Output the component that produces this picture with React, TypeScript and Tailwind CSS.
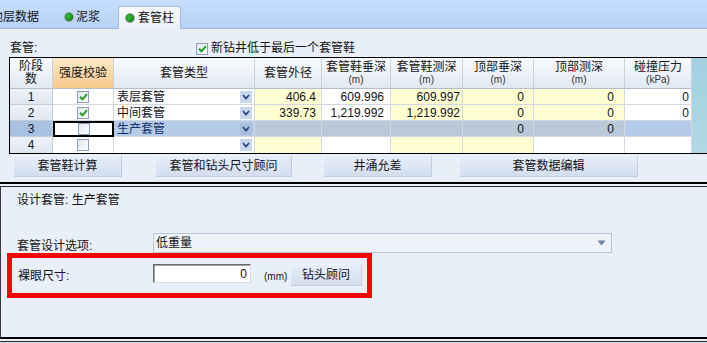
import React from "react";

const widths = ["w-[43px]", "w-[61px]", "w-[141px]", "w-[67px]", "w-[69px]", "w-[72px]", "w-[71px]", "w-[91px]", "w-[67px]"];
const numW = ["w-[67px]", "w-[69px]", "w-[72px]", "w-[71px]", "w-[91px]", "w-[67px]"];
const numPad = ["pr-[5px]", "pr-[6px]", "pr-[2px]", "pr-[9px]", "pr-[10px]", "pr-[2px]"];

const Y = "bg-[#fffed3]";
const W = "bg-white";
const S = "bg-[#b9c9d8]";
const B = "bg-[#b4cbe9]";

type Row = { n: string; checked: boolean; type: string; vals: string[]; bgs: string[]; sel?: boolean };

const rows: Row[] = [
  { n: "1", checked: true, type: "表层套管", vals: ["406.4", "609.996", "609.997", "0", "0", "0"], bgs: [Y, W, Y, Y, Y, W] },
  { n: "2", checked: true, type: "中间套管", vals: ["339.73", "1,219.992", "1,219.992", "0", "0", "0"], bgs: [Y, W, Y, Y, Y, W] },
  { n: "3", checked: false, type: "生产套管", vals: ["", "", "", "0", "0", ""], bgs: [S, S, S, S, S, B], sel: true },
  { n: "4", checked: false, type: "", vals: ["", "", "", "", "", ""], bgs: [Y, W, Y, Y, W, W] },
];

const headers: [string, string?][] = [
  ["阶段", "数"],
  ["强度校验"],
  ["套管类型"],
  ["套管外径"],
  ["套管鞋垂深", "(m)"],
  ["套管鞋测深", "(m)"],
  ["顶部垂深", "(m)"],
  ["顶部测深", "(m)"],
  ["碰撞压力", "(kPa)"],
];

function Check({ checked }: { checked: boolean }) {
  return (
    <span className="flex h-[12px] w-[12px] items-center justify-center border border-[#8e9fb5] bg-gradient-to-br from-[#dfe5ee] to-white">
      {checked && (
        <svg width="9" height="8" viewBox="0 0 9 8">
          <path d="M1 3.8 L3.5 6.3 L8 1.2" fill="none" stroke="#22a022" strokeWidth="2" />
        </svg>
      )}
    </span>
  );
}

function Dot() {
  return (
    <span className="h-[10px] w-[10px] rounded-full border border-[#8aa596] bg-[radial-gradient(circle_at_40%_40%,#3cbf3c,#086a08)]" />
  );
}

function Arrow({ dark }: { dark?: boolean }) {
  return (
    <span className={`flex h-[12px] w-[12px] items-center justify-center ${dark ? "bg-[#a9bedb]" : "bg-[#c9d8ee]"}`}>
      <svg width="8" height="6" viewBox="0 0 8 6">
        <path d="M1 1 L4 4.5 L7 1" fill="none" stroke="#2c4c86" strokeWidth="1.8" />
      </svg>
    </span>
  );
}

function Btn({ className, children }: { className: string; children: React.ReactNode }) {
  return (
    <div
      className={`flex h-[22px] items-center justify-center border border-[#eef3fa] border-b-[#c2cfe1] border-r-[#c2cfe1] bg-gradient-to-b from-[#e7eef9] to-[#d2deee] ${className}`}
    >
      {children}
    </div>
  );
}

export default function App() {
  return (
    <div className="relative h-[343px] w-[707px] overflow-hidden bg-[#e9eff8] font-['Liberation_Sans','Noto_Sans_CJK_SC',sans-serif] text-[12px] leading-[14px] text-[#141414]">
      {/* tabs */}
      <div className="flex h-[29px] items-end border-b border-[#9fb7d6] bg-gradient-to-b from-[#c7defd] to-[#b7d2f6]">
        <div className="flex h-[22px] items-center">
          <span className="ml-[-9px]">地层数据</span>
        </div>
        <div className="ml-[25px] flex h-[22px] items-center gap-[2px]">
          <Dot />
          <span>泥浆</span>
        </div>
        <div className="mb-[-1px] ml-[18px] flex h-[23px] items-center gap-[3px] rounded-t-[3px] border border-b-0 border-[#a5bcd9] bg-gradient-to-b from-[#f7f9fd] to-[#eaf0f8] px-[6px]">
          <Dot />
          <span>套管柱</span>
        </div>
      </div>

      {/* upper panel */}
      <div className="flex h-[28px] items-end pb-[2px] pl-[10px]">
        <span className="w-[186px]">套管:</span>
        <Check checked />
        <span className="ml-[3px]">新钻井低于最后一个套管鞋</span>
      </div>

      <div className="ml-[9px] w-[720px] border border-black bg-gradient-to-b from-[#a4d0df] to-[#b0d9e6]">
        <div className="flex h-[31px]">
          {headers.map((h, i) => (
            <div
              key={i}
              className={`${widths[i]} flex flex-col items-center justify-center border-b border-r border-b-[#b3bfcd] border-r-[#c8d1dd] ${
                i === 1 ? "bg-gradient-to-b from-[#fde9c9] to-[#f7c98a]" : "bg-gradient-to-b from-[#f9fbfd] to-[#e1e8f1]"
              }`}
            >
              <span className="leading-[13px]">{h[0]}</span>
              {h[1] && <span className={h[1] === "数" ? "leading-[13px]" : "text-[10px] leading-[11px] text-[#333]"}>{h[1]}</span>}
            </div>
          ))}
        </div>
        {rows.map((r, ri) => (
          <div key={ri} className="flex h-[16px]">
            <div
              className={`w-[43px] flex items-center justify-center border-r border-[#c4cdd9] ${ri < 3 ? "border-b" : ""} ${
                r.sel ? "bg-[#a8c0e1]" : "bg-gradient-to-b from-[#eef2f8] to-[#e0e7f1]"
              }`}
            >
              {r.n}
            </div>
            <div
              className={`w-[61px] flex items-center justify-center bg-white ${
                r.sel ? "border-2 border-black" : `border-r border-[#d3d9e2] ${ri < 3 ? "border-b" : ""}`
              }`}
            >
              <Check checked={r.checked} />
            </div>
            <div
              className={`w-[141px] flex items-center justify-between border-r border-[#d3d9e2] pl-[3px] pr-[2px] ${ri < 3 ? "border-b" : ""} ${
                r.sel ? "bg-[#b6cbe8] text-[#17336a]" : "bg-white"
              }`}
            >
              <span>{r.type}</span>
              <Arrow dark={r.sel} />
            </div>
            {r.vals.map((v, vi) => (
              <div
                key={vi}
                className={`${numW[vi]} ${numPad[vi]} ${r.bgs[vi]} flex items-center justify-end border-r border-[#d3d9e2] ${ri < 3 ? "border-b" : ""}`}
              >
                {v}
              </div>
            ))}
          </div>
        ))}
      </div>

      <div className="mt-[1px] flex">
        <Btn className="ml-[13px] w-[109px]">套管鞋计算</Btn>
        <Btn className="ml-[33px] w-[137px]">套管和钻头尺寸顾问</Btn>
        <Btn className="ml-[31px] w-[109px]">井涌允差</Btn>
        <Btn className="ml-[27px] w-[179px]">套管数据编辑</Btn>
      </div>

      {/* splitter */}
      <div className="mt-[5px] h-[5px] border-b border-t-2 border-b-[#2b2b2b] border-t-black" />

      {/* lower panel */}
      <div className="flex h-[150px] flex-col border-l border-[#3a3a3a]">
        <div className="flex h-[26px] items-center pl-[16px]">设计套管: 生产套管</div>
        <div className="mt-[20px] flex h-[20px]">
          <span className="w-[152px] pl-[16px] pt-[6px]">套管设计选项:</span>
          <div className="flex w-[459px] items-center justify-between border border-[#b7c6da] bg-[#eef3fa] pl-[2px] pr-[5px]">
            <span>低重量</span>
            <svg width="9" height="6" viewBox="0 0 9 6">
              <path d="M0.5 0.5 L8.5 0.5 L4.5 5.5 Z" fill="#6e819c" />
            </svg>
          </div>
        </div>
        <div className="ml-[6px] flex h-[45px] w-[365px] border-[5px] border-[#ff0000]">
          <span className="w-[141px] self-center pl-[6px]">裸眼尺寸:</span>
          <div className="mt-[6px] flex h-[19px] w-[98px] items-center justify-end border border-[#d9dee6] border-l-[#6a6a6a] border-t-[#6a6a6a] bg-white pr-[3px] shadow-[inset_1px_1px_0_#a0a0a0]">
            0
          </div>
          <span className="ml-[13px] mt-[13px] w-[26px] text-[10px] leading-[12px]">(mm)</span>
          <Btn className="mt-[6px] w-[72px]">钻头顾问</Btn>
        </div>
      </div>

      {/* bottom splitter */}
      <div className="h-[5px] border-b border-t-2 border-b-[#2b2b2b] border-t-black" />
      <div className="h-[10px] bg-[#c7dbf3]" />
    </div>
  );
}
